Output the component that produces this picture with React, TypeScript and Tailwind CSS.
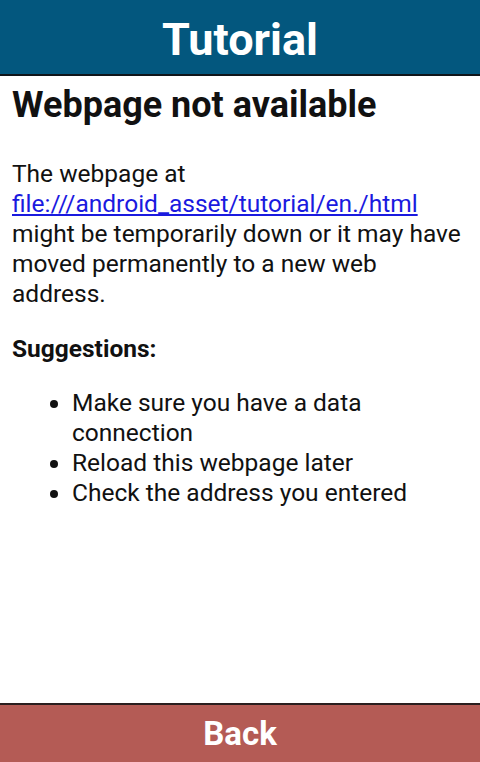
export default function App() {
    return (
        <div className="flex h-screen flex-col bg-white font-['Roboto',sans-serif] text-[#111]">
            <header className="flex h-[76px] shrink-0 items-center justify-center border-b-2 border-[#10151a] bg-[#03577e] pt-[4px]">
                <h1 className="text-[45px] font-bold leading-none text-white">Tutorial</h1>
            </header>

            <main className="flex-1 overflow-hidden px-3 pt-[9px]">
                <h2 className="text-[36px] font-bold leading-[40px]">Webpage not available</h2>
                <p className="mt-[34px] text-[24.5px] leading-[30px]">
                    The webpage at
                    <br />
                    <a href="#" className="text-[#1a1adf] underline">
                        file:///android_asset/tutorial/en./html
                    </a>
                    <br />
                    might be temporarily down or it may have moved permanently to a new web address.
                </p>
                <p className="mt-[25px] text-[24.5px] font-bold leading-[30px]">Suggestions:</p>
                <ul className="mt-[24px] list-disc pl-[60px] text-[24.5px] leading-[30px]">
                    <li>Make sure you have a data connection</li>
                    <li>Reload this webpage later</li>
                    <li>Check the address you entered</li>
                </ul>
            </main>

            <footer className="flex h-[59px] shrink-0 items-center justify-center border-t-2 border-[#2a1e1e] bg-[#b45b55]">
                <span className="text-[33px] font-bold leading-none text-white">Back</span>
            </footer>
        </div>
    );
}
